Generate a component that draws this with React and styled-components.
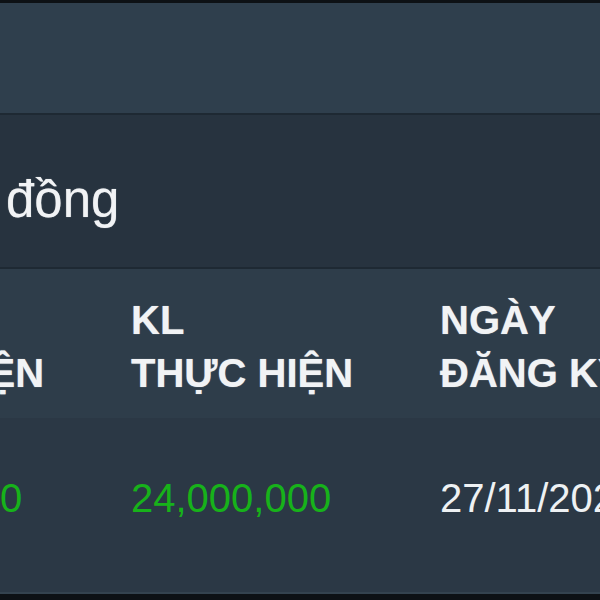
import React from 'react'
import styled, { createGlobalStyle } from 'styled-components'

const columns = [
  { key: 'price', top: 'GIÁ', bottom: 'THỰC HIỆN', value: '24,000,000', tone: 'up' },
  { key: 'volume', top: 'KL', bottom: 'THỰC HIỆN', value: '24,000,000', tone: 'up' },
  { key: 'date', top: 'NGÀY', bottom: 'ĐĂNG KÝ', value: '27/11/2023', tone: 'plain' }
]

const App = () => (
  <Screen>
    <GlobalStyle />
    <TopBar />
    <Caption>đồng</Caption>
    <Viewport>
      <Table>
        <HeadRow>
          {columns.map(col => (
            <HeadCell key={col.key}>
              <span>{col.top}</span>
              <span>{col.bottom}</span>
            </HeadCell>
          ))}
        </HeadRow>
        <BodyRow>
          {columns.map(col => (
            <Cell key={col.key} tone={col.tone}>{col.value}</Cell>
          ))}
        </BodyRow>
      </Table>
    </Viewport>
  </Screen>
)

export default App

const GlobalStyle = createGlobalStyle`
  html, body {
    margin: 0;
    padding: 0;
    background: #0d1115;
  }
  * {
    box-sizing: border-box;
  }
`

const Screen = styled.div`
  width: 600px;
  height: 600px;
  padding-top: 3px;
  background: #0d1115;
  font-family: 'Liberation Sans', Arial, sans-serif;
  color: #f1f3f5;
  overflow: hidden;
  display: flex;
  flex-direction: column;
`

const TopBar = styled.div`
  height: 112px;
  background: #2f3f4d;
  border-bottom: 2px solid #1e2933;
  flex-shrink: 0;
`

const Caption = styled.div`
  height: 154px;
  padding: 56px 0 0 6px;
  background: #27333f;
  border-bottom: 2px solid #1e2933;
  font-size: 51px;
  line-height: 57px;
  text-shadow: 0 0 1px rgba(255, 255, 255, 0.6);
  flex-shrink: 0;
`

const Viewport = styled.div`
  overflow: hidden;
  flex-shrink: 0;
`

const Table = styled.div`
  margin-left: -178px;
  width: 927px;
  display: flex;
  flex-direction: column;
`

const HeadRow = styled.div`
  display: grid;
  grid-template-columns: repeat(3, 309px);
  height: 149px;
  padding-top: 25px;
  background: #2e3d4a;
`

const HeadCell = styled.div`
  display: flex;
  flex-direction: column;
  font-size: 40px;
  font-weight: 700;
  line-height: 53px;
  white-space: nowrap;
  text-shadow: 0 0 1px rgba(255, 255, 255, 0.6);
`

const BodyRow = styled.div`
  display: grid;
  grid-template-columns: repeat(3, 309px);
  height: 176px;
  padding-top: 57px;
  background: #2b3845;
  border-bottom: 2px solid #34434f;
`

const Cell = styled.div`
  font-size: 40px;
  line-height: 46px;
  white-space: nowrap;
  color: ${({ tone }) => (tone === 'up' ? '#17b21a' : '#eef1f3')};
`
